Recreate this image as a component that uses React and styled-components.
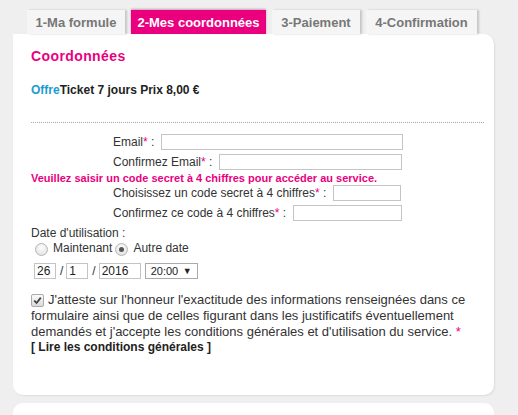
import React from "react";
import styled, { createGlobalStyle } from "styled-components";

const Global = createGlobalStyle`
  html, body { margin: 0; padding: 0; background: #efefef; }
  body {
    font-family: "Liberation Sans", Arial, sans-serif;
    font-size: 12px;
    color: #333;
  }
`;

const PINK = "#ea007f";

const Page = styled.div`
  width: 518px;
  height: 415px;
  overflow: hidden;
  padding-top: 10px;
  box-sizing: border-box;
`;

const Tabs = styled.div`
  display: flex;
  gap: 6px;
  margin-left: 27px;
  height: 24px;
`;

const Tab = styled.div`
  width: ${(p) => p.$w}px;
  height: 24px;
  box-sizing: border-box;
  display: flex;
  align-items: center;
  justify-content: center;
  font-weight: bold;
  font-size: 13px;
  color: ${(p) => (p.$active ? "#fff" : "#777")};
  background: ${(p) => (p.$active ? PINK : "#f5f5f5")};
  box-shadow: ${(p) =>
    p.$active ? "0 -1px 2px rgba(120,0,60,0.35)" : "2px 0 2px rgba(0,0,0,0.18)"};
`;

const Card = styled.div`
  margin-left: 13px;
  width: 481px;
  background: #fff;
  border-radius: 0 10px 10px 10px;
  box-shadow: 1px 1px 2px rgba(0, 0, 0, 0.08);
  padding: 14px 10px 0 18px;
  box-sizing: border-box;
  height: 361px;
`;

const NextCard = styled.div`
  margin: 8px 0 0 13px;
  width: 481px;
  height: 40px;
  background: #fff;
  border-radius: 10px 10px 0 0;
`;

const Title = styled.h2`
  margin: 0;
  color: ${PINK};
  font-size: 14px;
  font-weight: bold;
  letter-spacing: 0.4px;
  line-height: 16px;
`;

const Offer = styled.div`
  margin-top: 19px;
  font-weight: bold;
  font-size: 12px;
  color: #222;
  line-height: 14px;
`;

const Blue = styled.span`
  color: #1d9bd1;
`;

const Divider = styled.hr`
  margin: 25px 0 9px;
  border: 0;
  border-top: 1px dotted #aaa;
`;

const Row = styled.div`
  display: flex;
  align-items: center;
  margin-left: 82px;
  height: 20px;
`;

const Label = styled.label`
  margin-right: 7px;
  white-space: nowrap;
`;

const Star = styled.span`
  color: ${PINK};
`;

const Field = styled.input`
  width: ${(p) => p.$w}px;
  height: 16px;
  box-sizing: border-box;
  border: 1px solid #c4c4c4;
  padding: 0 2px;
  font: inherit;
  font-size: 12px;
  color: #222;
`;

const Warning = styled.div`
  color: ${PINK};
  font-weight: bold;
  font-size: 11px;
  line-height: 12px;
  margin-bottom: -1px;
`;

const Plain = styled.div`
  margin-top: 3px;
  line-height: 14px;
`;

const Radios = styled.div`
  display: flex;
  align-items: center;
  margin-left: 4px;
  height: 16px;
`;

const Radio = styled.span`
  width: 11px;
  height: 11px;
  border-radius: 50%;
  border: 1px solid #b5b5b5;
  background: radial-gradient(circle at 50% 35%, #fdfdfd, #dcdcdc);
  display: inline-flex;
  align-items: center;
  justify-content: center;
  margin: 2px 5px 0 0;
  &::after {
    content: "";
    width: 5px;
    height: 5px;
    border-radius: 50%;
    background: ${(p) => (p.$on ? "#555" : "transparent")};
  }
`;

const RadioText = styled.span`
  margin-right: 3px;
`;

const DateRow = styled.div`
  display: flex;
  align-items: center;
  margin: 7px 0 0 3px;
  height: 16px;
`;

const Slash = styled.span`
  margin: 0 3px 0 4px;
`;

const Select = styled.div`
  margin-left: 4px;
  width: 53px;
  height: 16px;
  box-sizing: border-box;
  border: 1px solid #aaa;
  display: flex;
  align-items: center;
  justify-content: space-between;
  padding: 0 5px 0 5px;
  font-size: 11px;
  color: #222;
`;

const Arrow = styled.span`
  font-size: 9px;
`;

const Consent = styled.div`
  margin-top: 13px;
  font-size: 13px;
  line-height: 16px;
  color: #333;
`;

const Check = styled.span`
  display: inline-flex;
  vertical-align: -1px;
  width: 11px;
  height: 11px;
  border: 1px solid #aaa;
  border-radius: 2px;
  background: linear-gradient(#fafafa, #dadada);
  margin-right: 4px;
  align-items: center;
  justify-content: center;
`;

const ReadLink = styled.a`
  display: block;
  font-weight: bold;
  font-size: 12px;
  color: #222;
  text-decoration: none;
  line-height: 14px;
`;

export default function App() {
  return (
    <Page>
      <Global />
      <Tabs>
        <Tab $w={98}>1-Ma formule</Tab>
        <Tab $w={135} $active>2-Mes coordonnées</Tab>
        <Tab $w={88}>3-Paiement</Tab>
        <Tab $w={111}>4-Confirmation</Tab>
      </Tabs>
      <Card>
        <Title>Coordonnées</Title>
        <Offer>
          <Blue>Offre</Blue>Ticket 7 jours Prix 8,00 €
        </Offer>
        <Divider />
        <Row>
          <Label>
            Email<Star>*</Star> :
          </Label>
          <Field $w={242} />
        </Row>
        <Row>
          <Label>
            Confirmez Email<Star>*</Star> :
          </Label>
          <Field $w={183} />
        </Row>
        <Warning>Veuillez saisir un code secret à 4 chiffres pour accéder au service.</Warning>
        <Row>
          <Label>
            Choisissez un code secret à 4 chiffres<Star>*</Star> :
          </Label>
          <Field $w={68} />
        </Row>
        <Row>
          <Label>
            Confirmez ce code à 4 chiffres<Star>*</Star> :
          </Label>
          <Field $w={109} />
        </Row>
        <Plain>Date d'utilisation :</Plain>
        <Radios>
          <Radio />
          <RadioText>Maintenant</RadioText>
          <Radio $on />
          <RadioText>Autre date</RadioText>
        </Radios>
        <DateRow>
          <Field $w={22} defaultValue="26" />
          <Slash>/</Slash>
          <Field $w={22} defaultValue="1" />
          <Slash>/</Slash>
          <Field $w={42} defaultValue="2016" />
          <Select>
            20:00 <Arrow>▼</Arrow>
          </Select>
        </DateRow>
        <Consent>
          <Check>
            <svg width="9" height="9" viewBox="0 0 9 9">
              <path d="M1.2 4.6 L3.6 7 L7.8 1.6" fill="none" stroke="#444" strokeWidth="1.8" />
            </svg>
          </Check>
          J'atteste sur l'honneur l'exactitude des informations renseignées dans ce formulaire ainsi
          que de celles figurant dans les justificatifs éventuellement demandés et j'accepte les
          conditions générales et d'utilisation du service. <Star>*</Star>
          <ReadLink href="#">[ Lire les conditions générales ]</ReadLink>
        </Consent>
      </Card>
      <NextCard />
    </Page>
  );
}
